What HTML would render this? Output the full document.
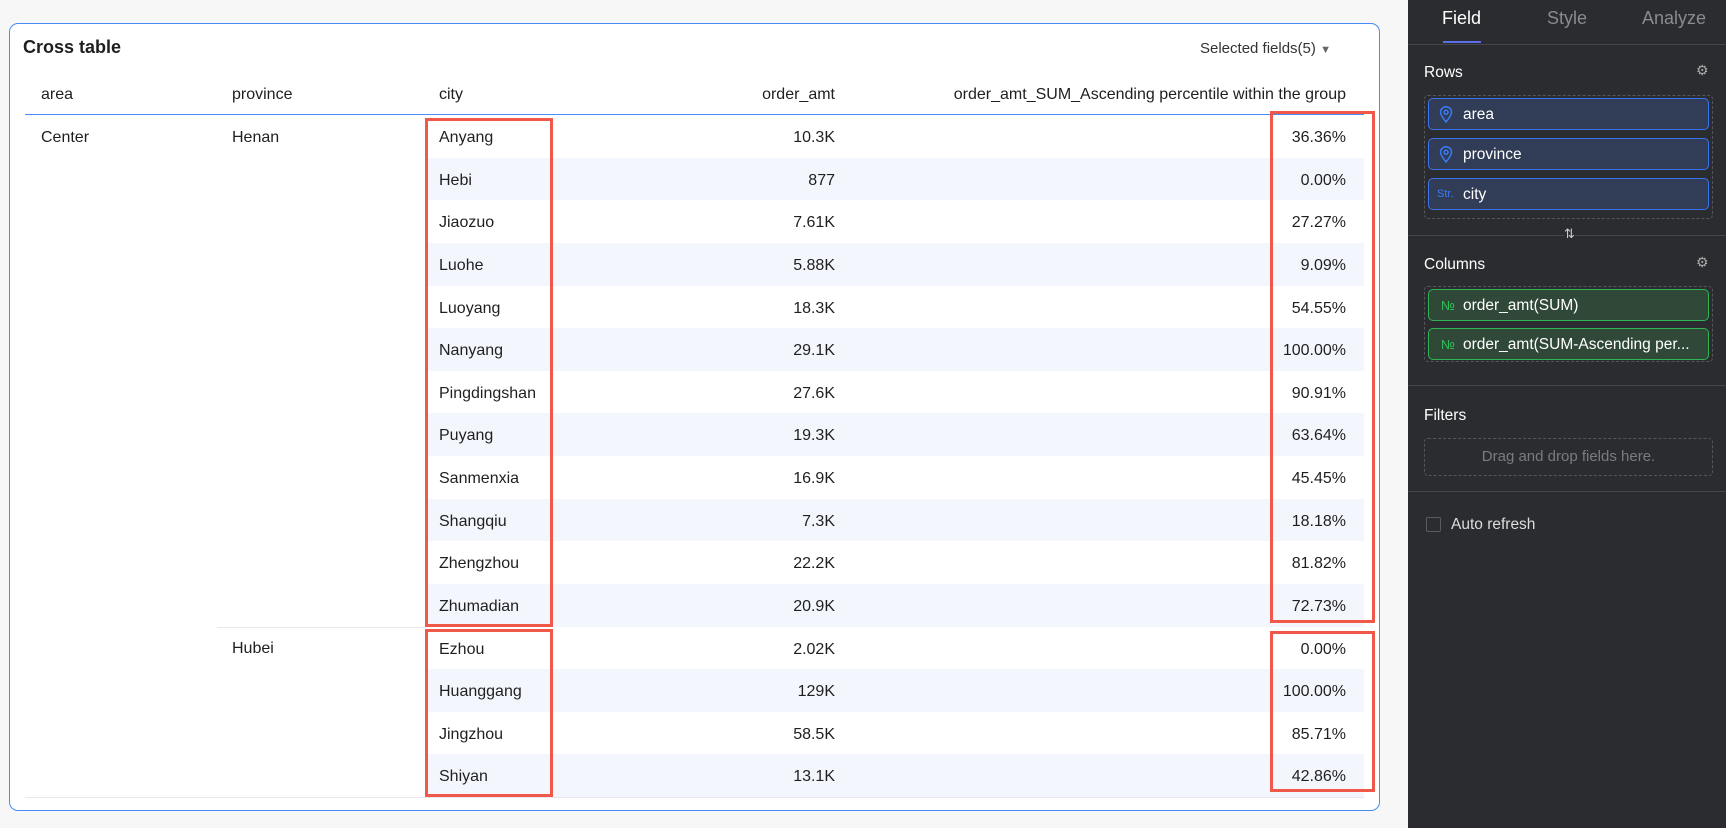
<!DOCTYPE html>
<html><head><meta charset="utf-8"><style>
*{box-sizing:border-box;margin:0;padding:0}
body{width:1726px;height:828px;background:#f7f7f8;font-family:"Liberation Sans",Arial,sans-serif;position:relative;overflow:hidden;color:#1f1f1f}
.a{position:absolute;white-space:nowrap}
.card{position:absolute;left:9px;top:23px;width:1371px;height:788px;background:#fff;border:1px solid #4a8bf5;border-radius:9px}
.row{position:absolute;left:426px;width:938px;height:43px}
.t{position:absolute;font-size:16px;line-height:43px;white-space:nowrap}
.red{position:absolute;border:3.5px solid #f0584a}
.side{position:absolute;left:1408px;top:0;width:318px;height:828px;background:#2b2c30;color:#fff}
.pill{position:absolute;left:20px;width:281px;height:32px;border:1px solid #3a73f0;background:#313c56;border-radius:5px;font-size:15.5px;line-height:31px;padding-left:34px}
.pg{border-color:#2fb454;background:#2f4838}
.hr{position:absolute;left:0;width:318px;height:1px;background:#45464b}
.dash{position:absolute;left:16px;width:289px;border:1px dashed #55565b;border-radius:4px}
.lbl{position:absolute;left:16px;font-size:15.5px}
</style></head><body>
<div class="card"></div>
<div class="a" style="left:23px;top:37px;font-size:18px;font-weight:bold">Cross table</div>
<div class="a" style="left:1200px;top:40px;font-size:15px;color:#333">Selected fields(5) <span style="font-size:11px;color:#666">▼</span></div>
<div class="a" style="left:41px;top:86px;font-size:16px">area</div>
<div class="a" style="left:232px;top:86px;font-size:16px">province</div>
<div class="a" style="left:439px;top:86px;font-size:16px">city</div>
<div class="a" style="left:735px;width:100px;text-align:right;top:86px;font-size:16px">order_amt</div>
<div class="a" style="left:900px;width:446px;text-align:right;top:86px;font-size:16px">order_amt_SUM_Ascending percentile within the group</div>
<div class="a" style="left:25px;top:114px;width:1339px;height:1px;background:#4a8bf5"></div>
<div class="t" style="left:41px;top:116px">Center</div>
<div class="t" style="left:232px;top:116px">Henan</div>
<div class="t" style="left:232px;top:627px">Hubei</div>
<div class="a" style="left:217px;top:627px;width:1147px;height:1px;background:#e6e8ee"></div>
<div class="a" style="left:25px;top:797px;width:1339px;height:1px;background:#e6e8ee"></div>
<div id="rows"></div>
<script>
var d=[["Anyang","10.3K","36.36%"],["Hebi","877","0.00%"],["Jiaozuo","7.61K","27.27%"],["Luohe","5.88K","9.09%"],["Luoyang","18.3K","54.55%"],["Nanyang","29.1K","100.00%"],["Pingdingshan","27.6K","90.91%"],["Puyang","19.3K","63.64%"],["Sanmenxia","16.9K","45.45%"],["Shangqiu","7.3K","18.18%"],["Zhengzhou","22.2K","81.82%"],["Zhumadian","20.9K","72.73%"],["Ezhou","2.02K","0.00%"],["Huanggang","129K","100.00%"],["Jingzhou","58.5K","85.71%"],["Shiyan","13.1K","42.86%"]];
var h="";
d.forEach(function(r,i){var y=115+i*42.63;
h+='<div class="row" style="top:'+y+'px;background:'+(i%2?'#f3f7fd':'#fff')+'"></div>';
h+='<div class="t" style="left:439px;top:'+(y+1)+'px">'+r[0]+'</div>';
h+='<div class="t" style="left:735px;width:100px;text-align:right;top:'+(y+1)+'px">'+r[1]+'</div>';
h+='<div class="t" style="left:1246px;width:100px;text-align:right;top:'+(y+1)+'px">'+r[2]+'</div>';});
document.getElementById("rows").innerHTML=h;
</script>
<div class="red" style="left:425px;top:118px;width:128px;height:509px"></div>
<div class="red" style="left:1270px;top:111px;width:105px;height:512px"></div>
<div class="red" style="left:425px;top:629px;width:128px;height:168px"></div>
<div class="red" style="left:1270px;top:631px;width:105px;height:161px"></div>

<div class="side">
<div class="a" style="left:34px;top:8px;font-size:18px">Field</div>
<div class="a" style="left:35px;top:41px;width:38px;height:2px;background:#5b6ee8"></div>
<div class="a" style="left:139px;top:8px;font-size:18px;color:#8a8b90">Style</div>
<div class="a" style="left:234px;top:8px;font-size:18px;color:#8a8b90">Analyze</div>
<div class="hr" style="top:44px"></div>
<div class="lbl" style="top:64px">Rows</div>
<div class="a" style="left:288px;top:62px;color:#aaa;font-size:14px">⚙</div>
<div class="dash" style="top:95px;height:124px"></div>
<div class="pill" style="top:98px"><svg class="a" style="left:10px;top:7px" width="14" height="17" viewBox="0 0 14 17"><path d="M7 16C3 11 1.5 8.5 1.5 6.2a5.5 5.5 0 0 1 11 0C12.5 8.5 11 11 7 16z" fill="none" stroke="#3a7bf5" stroke-width="1.5"/><circle cx="7" cy="6.3" r="2" fill="none" stroke="#3a7bf5" stroke-width="1.5"/></svg>area</div>
<div class="pill" style="top:138px"><svg class="a" style="left:10px;top:7px" width="14" height="17" viewBox="0 0 14 17"><path d="M7 16C3 11 1.5 8.5 1.5 6.2a5.5 5.5 0 0 1 11 0C12.5 8.5 11 11 7 16z" fill="none" stroke="#3a7bf5" stroke-width="1.5"/><circle cx="7" cy="6.3" r="2" fill="none" stroke="#3a7bf5" stroke-width="1.5"/></svg>province</div>
<div class="pill" style="top:178px"><span class="a" style="left:8px;font-size:11px;color:#3a7bf5">Str.</span>city</div>
<div class="hr" style="top:235px"></div>
<div class="a" style="left:156px;top:226px;font-size:13px;color:#ccc;background:#2b2c30">⇅</div>
<div class="lbl" style="top:256px">Columns</div>
<div class="a" style="left:288px;top:254px;color:#aaa;font-size:14px">⚙</div>
<div class="dash" style="top:286px;height:76px"></div>
<div class="pill pg" style="top:289px"><span class="a" style="left:12px;font-size:13px;color:#2fc05a">№</span>order_amt(SUM)</div>
<div class="pill pg" style="top:328px"><span class="a" style="left:12px;font-size:13px;color:#2fc05a">№</span>order_amt(SUM-Ascending per...</div>
<div class="hr" style="top:385px"></div>
<div class="lbl" style="top:407px">Filters</div>
<div class="dash" style="top:438px;height:38px;text-align:center;line-height:36px;font-size:15px;color:#7a7b80">Drag and drop fields here.</div>
<div class="hr" style="top:491px"></div>
<div class="a" style="left:18px;top:517px;width:15px;height:15px;border:1px solid #5a5b60;border-radius:2px"></div>
<div class="a" style="left:43px;top:516px;font-size:15.5px;color:#ddd">Auto refresh</div>
</div>
</body></html>
